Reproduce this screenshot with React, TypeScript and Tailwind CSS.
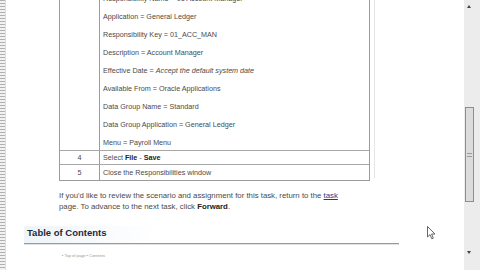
import React from "react";

const LINES: React.ReactNode[] = [
  "Responsibility Name = 01 Account Manager",
  "Application = General Ledger",
  "Responsibility Key = 01_ACC_MAN",
  "Description = Account Manager",
  <>
    Effective Date = <i>Accept the default system date</i>
  </>,
  "Available From = Oracle Applications",
  "Data Group Name = Standard",
  "Data Group Application = General Ledger",
  "Menu = Payroll Menu",
];

const StepTable = () => (
  <div className="ml-[53px] w-[311px] border border-[#9c9c9c] text-[7.2px]">
    <div className="flex border-b border-[#a8a8a8]">
      <div className="w-[40px] shrink-0 border-r border-[#9c9c9c]" />
      <div className="h-[160px] flex-1 pl-[3px]">
        {LINES.map((l, i) => (
          <div key={i} className="h-[18px] whitespace-nowrap leading-[18px]">
            {l}
          </div>
        ))}
      </div>
    </div>
    <div className="flex h-[14px] border-b border-[#a8a8a8] leading-[14px]">
      <div className="w-[40px] shrink-0 border-r border-[#9c9c9c] text-center">4</div>
      <div className="flex-1 pl-[3px]">
        Select <b className="text-[#222]">File</b> - <b className="text-[#222]">Save</b>
      </div>
    </div>
    <div className="flex h-[15px] leading-[15px]">
      <div className="w-[40px] shrink-0 border-r border-[#9c9c9c] text-center">5</div>
      <div className="flex-1 pl-[3px]">Close the Responsibilities window</div>
    </div>
  </div>
);

const Scrollbar = () => (
  <div className="flex h-full w-[16px] shrink-0 flex-col bg-[#ececec]">
    <div className="flex h-[12px] items-center pl-[3px]">
      <div className="h-0 w-0 border-x-[2.5px] border-b-[3px] border-x-transparent border-b-[#444]" />
    </div>
    <div className="mt-[95px] ml-[1px] flex h-[95px] w-[9px] items-center justify-center border border-[#8e8e8e] bg-[#dcdcdc]">
      <div className="h-[4px] w-[5px] border-y border-[#9a9a9a]" />
    </div>
    <div className="mt-[44px] flex h-[12px] items-center pl-[3px]">
      <div className="h-0 w-0 border-x-[2.5px] border-t-[3px] border-x-transparent border-t-[#444]" />
    </div>
  </div>
);

const Cursor = () => (
  <svg className="absolute left-[427px] top-[226px]" width="9" height="14" viewBox="0 0 9 14">
    <path d="M0.5 0.5 L0.5 11 L3 8.6 L4.8 12.8 L6.3 12.1 L4.6 8 L8 8 Z" fill="#fff" stroke="#555" strokeWidth="0.9" strokeLinejoin="round" />
  </svg>
);

export default function App() {
  return (
    <div className="relative flex h-[270px] w-[480px] overflow-hidden bg-white font-['Liberation_Sans',Arial,sans-serif] text-[#4a4a4a]">
      <div className="h-full w-[6px] shrink-0 border-r border-[#dcdcdc] bg-[repeating-linear-gradient(to_bottom,#b0b0b0_0_1px,#f2f2f2_1px_3px)]" />

      <main className="-mt-[11px] flex-1">
        <StepTable />

        <p className="ml-[53px] mt-[9px] whitespace-nowrap text-[7.8px] leading-[11px]">
          If you'd like to review the scenario and assignment for this task, return to the{" "}
          <a className="text-[#1d3a8c] underline">task</a>
          <br />
          page. To advance to the next task, click <b className="text-[#222]">Forward</b>.
        </p>

        <section className="ml-[18px] mt-[14px] w-[375px]">
          <h2 className="border-b border-[#9a9a9a] bg-[linear-gradient(to_right,#eef4f8,#ffffff_35%)] pb-[3px] pl-[3px] text-[9.5px] font-bold leading-[14px] text-[#1c2b3c]">
            Table of Contents
          </h2>
          <div className="h-px bg-[#e2e2e2]" />
          <div className="ml-[38px] mt-[8px] text-[4px] leading-[6px] text-[#9a9a9a]">
            ▪ Top of page ▪ Contents
          </div>
        </section>
      </main>

      <div className="absolute left-[374px] top-0 h-[178px] w-px bg-[#e4e4e4]" />
      <Scrollbar />
      <Cursor />
    </div>
  );
}
